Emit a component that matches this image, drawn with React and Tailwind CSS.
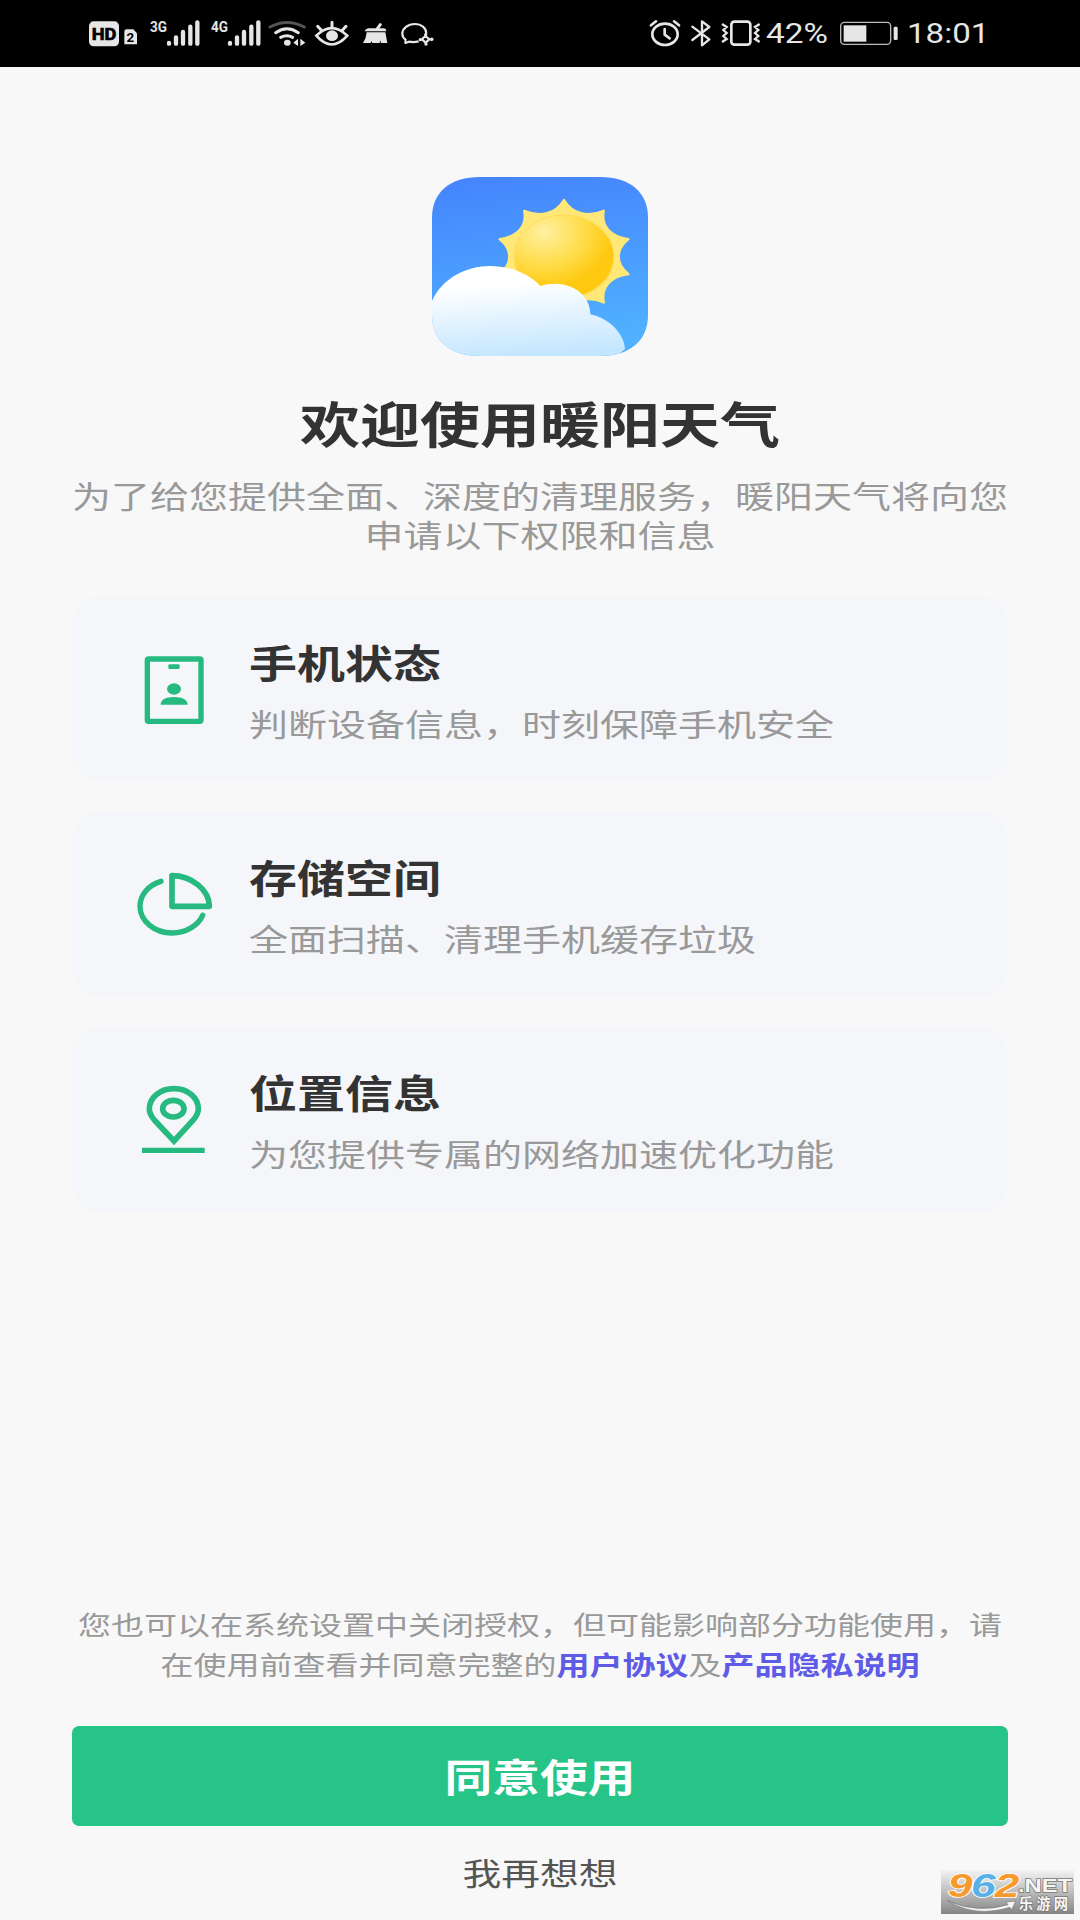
import clsx from 'clsx';

const FONT = "font-['Noto_Sans_CJK_SC','Liberation_Sans',sans-serif]";

const PERMISSIONS = [
  { icon: IdCardIcon, title: '手机状态', desc: '判断设备信息，时刻保障手机安全' },
  { icon: PieIcon, title: '存储空间', desc: '全面扫描、清理手机缓存垃圾' },
  { icon: PinIcon, title: '位置信息', desc: '为您提供专属的网络加速优化功能' },
];

export default function App() {
  return (
    <div className={clsx('relative flex h-[1920px] w-[1080px] flex-col overflow-hidden bg-[#f8f8f8]', FONT)}>
      <StatusBar />

      <main className="flex flex-1 flex-col items-center px-[72px]">
        <AppLogo />
        <Wide as="h1" scale="scale-x-[1.225]" className="mt-[31px] text-[49px] leading-[70px] font-bold text-[#333333]">欢迎使用暖阳天气</Wide>
        <Wide as="p" scale="scale-x-[1.258]" className="mt-[19px] text-center text-[31px] leading-[38.5px] text-[#999999]">
          为了给您提供全面、深度的清理服务，暖阳天气将向您
          <br />
          申请以下权限和信息
        </Wide>

        <div className="mt-[44px] flex w-full flex-col gap-[30px]">
          {PERMISSIONS.map((p) => <PermissionCard key={p.title} {...p} />)}
        </div>

        <Wide as="p" scale="scale-x-[1.245]" className="mt-auto text-center text-[26.5px] leading-[40px] text-[#999999]">
          您也可以在系统设置中关闭授权，但可能影响部分功能使用，请
          <br />
          在使用前查看并同意完整的
          <a className="font-bold text-[#5e5ce6]">用户协议</a>及<a className="font-bold text-[#5e5ce6]">产品隐私说明</a>
        </Wide>
        <button className="mt-[42px] flex h-[100px] w-full items-center justify-center rounded-[7px] bg-[#27c487] pb-[3px] text-[38.5px] leading-[60px] font-bold text-white">
          <Wide scale="scale-x-[1.24]">同意使用</Wide>
        </button>
        <button className="mt-[22px] mb-[24px] text-[31px] leading-[48px] text-[#555555]">
          <Wide scale="scale-x-[1.25]">我再想想</Wide>
        </button>
      </main>

      <Watermark />
    </div>
  );
}

// text with widened glyphs
function Wide({ as: Tag = 'span', scale, className, children }) {
  return (
    <Tag className={clsx('block origin-center whitespace-nowrap', scale, className)}>{children}</Tag>
  );
}

function PermissionCard({ icon: Icon, title, desc }) {
  return (
    <section className="flex h-[185px] items-center gap-[36px] rounded-[26px] bg-[#f5f6fa] pl-[61px]">
      <Icon />
      <div className="mb-[2px] flex flex-col whitespace-nowrap">
        <h2 className="origin-left scale-x-[1.24] text-[38.7px] leading-[60px] font-bold text-[#333333]">{title}</h2>
        <p className="mt-[8px] origin-left scale-x-[1.258] text-[31px] leading-[48px] text-[#999999]">{desc}</p>
      </div>
    </section>
  );
}

/* ---------- status bar ---------- */

function StatusBar() {
  return (
    <header className="flex h-[67px] shrink-0 items-center justify-between bg-black pr-[92px] pl-[88px]">
      <div className="flex items-center">
        <HdIcon />
        <SignalIcon label="3G" />
        <SignalIcon label="4G" />
        <WifiIcon />
        <EyeIcon />
        <BroomIcon />
        <ChatIcon />
      </div>
      <div className="flex items-center font-['Roboto',sans-serif] text-[28px] leading-[67px] text-[#e6e6e6]">
        <AlarmIcon />
        <BluetoothIcon />
        <VibrateIcon />
        <span className="mr-[1px] w-[71px] origin-left scale-x-[1.19]">42%</span>
        <BatteryIcon />
        <span className="w-[81px] origin-left scale-x-[1.18]">18:01</span>
      </div>
    </header>
  );
}

function HdIcon() {
  return (
    <svg width="52" height="67" viewBox="54 0 156 201">
      <rect x="57" y="64" width="90" height="75" rx="14" fill="#e6e6e6" />
      <text x="102" y="120" textAnchor="middle" textLength="74" lengthAdjust="spacingAndGlyphs" fontSize="50" fontWeight="700" fontFamily="Roboto" fill="#000" stroke="#000" strokeWidth="2">HD</text>
      <path d="M170 88h20l11 12v33h-38V95q0-7 7-7z" fill="#e6e6e6" />
      <text x="181" y="126" textAnchor="middle" textLength="23" lengthAdjust="spacingAndGlyphs" fontSize="40" fontWeight="700" fontFamily="Roboto" fill="#000">2</text>
    </svg>
  );
}

function SignalIcon({ label }) {
  return (
    <svg width="61" height="67" viewBox="210 0 183 201">
      <text x="240" y="95" textLength="51" lengthAdjust="spacingAndGlyphs" fontSize="45" fontWeight="700" fontFamily="Roboto" fill="#e6e6e6">{label}</text>
      <g stroke="#e6e6e6" strokeWidth="13" strokeLinecap="round">
        <path d="M297 129v2M318 112v19M339 96v35M361 80v51M382 67v64" />
      </g>
    </svg>
  );
}

function WifiIcon() {
  return (
    <svg className="ml-[2px]" width="45" height="67" viewBox="584 0 135 201" fill="none" strokeWidth="9" strokeLinecap="round">
      <path d="M602 81Q653 54 705 81" stroke="#555" />
      <path d="M619 98Q653 74 687 98M634 112Q653 102 670 112" stroke="#e6e6e6" />
      <ellipse cx="654" cy="128" rx="10" ry="9" fill="#e6e6e6" />
      <path d="M686 116v22l-14-10zM693 116v22l15-10z" fill="#e6e6e6" />
    </svg>
  );
}

function EyeIcon() {
  return (
    <svg width="46" height="67" viewBox="719 0 138 201" fill="none" stroke="#e6e6e6" strokeWidth="8" strokeLinecap="round">
      <path d="M741 107Q787 62 834 107Q787 160 741 107z" />
      <ellipse cx="788" cy="107" rx="18" ry="16" fill="#e6e6e6" stroke="none" />
      <path d="M788 67v14M745 79l11 12M830 79l-11 12" strokeWidth="9" />
    </svg>
  );
}

function BroomIcon() {
  return (
    <svg width="43" height="67" viewBox="857 0 129 201" fill="#e6e6e6">
      <path d="M924 86l9-12" stroke="#e6e6e6" strokeWidth="9" strokeLinecap="round" />
      <path d="M897 85h48q6 1 6 9H886q2-8 11-9z" />
      <path d="M892 97h56q3 16 6 32h-19l-2-8-2 8h-22l-3-6-2 6H881q10-14 11-32z" />
    </svg>
  );
}

function ChatIcon() {
  return (
    <svg width="38" height="67" viewBox="986 0 114 201" fill="none" stroke="#e6e6e6" strokeWidth="6.5" strokeLinejoin="round">
      <path d="M1071 101C1071 84 1056 72 1036 72S999 85 999 101Q999 112 1009 119L1008 129L1019 125Q1032 128 1048 124" />
      <path d="M1068 108L1080 118L1069 128L1058 118z" />
      <g fill="#e6e6e6" stroke="none">
        <circle cx="1069" cy="104" r="5" /><circle cx="1087" cy="118" r="5.5" />
        <circle cx="1070" cy="132" r="5" /><circle cx="1053" cy="119" r="5" />
      </g>
    </svg>
  );
}

function AlarmIcon() {
  return (
    <svg width="34" height="67" viewBox="54 0 102 201" fill="none" stroke="#e6e6e6" strokeWidth="8" strokeLinecap="round" strokeLinejoin="round">
      <ellipse cx="105" cy="103" rx="38" ry="32" />
      <path d="M104 87v17l15 11M63 76l15-12M147 76l-15-12" />
    </svg>
  );
}

function BluetoothIcon() {
  return (
    <svg width="35" height="67" viewBox="157 0 105 201" fill="none" stroke="#e6e6e6" strokeWidth="7" strokeLinecap="round" strokeLinejoin="round">
      <path d="M188 80l51 38-22 18V64l22 17-51 39" />
    </svg>
  );
}

function VibrateIcon() {
  return (
    <svg width="49" height="67" viewBox="266 0 147 201" fill="none" stroke="#e6e6e6" strokeWidth="8">
      <rect x="309" y="65" width="57" height="69" rx="9" />
      <path d="M281 72l14 9-10 9 10 9-10 9 10 9-14 9M394 72l-14 9 10 9-10 9 10 9-10 9 14 9" strokeWidth="7" />
    </svg>
  );
}

function BatteryIcon() {
  return (
    <svg width="69" height="67" viewBox="624 0 207 201">
      <rect x="632" y="67" width="150" height="66" rx="11" fill="none" stroke="#bbb" strokeWidth="4" />
      <rect x="641" y="76" width="68" height="49" fill="#e6e6e6" />
      <rect x="791" y="80" width="12" height="40" rx="4" fill="#e6e6e6" />
    </svg>
  );
}

/* ---------- logo ---------- */

// ten-pointed sun outline with scooped edges
function sunPath(cx, cy, rx, ry) {
  const at = (deg, k) => {
    const a = (deg * Math.PI) / 180;
    return `${(cx + Math.sin(a) * rx * k).toFixed(1)} ${(cy - Math.cos(a) * ry * k).toFixed(1)}`;
  };
  let d = `M${at(0, 1)}`;
  for (let i = 0; i < 10; i++) d += `C${at(i * 36 + 9, 0.77)} ${at(i * 36 + 27, 0.77)} ${at((i + 1) * 36, 1)}`;
  return d + 'Z';
}

function AppLogo() {
  return (
    <svg className="mt-[110px] shrink-0" width="216" height="179" viewBox="36 36 648 537">
      <defs>
        <linearGradient id="sky" x1="0" y1="0" x2="0.15" y2="1">
          <stop offset="0" stopColor="#4583fd" /><stop offset="1" stopColor="#4fb1ff" />
        </linearGradient>
        <radialGradient id="sun" cx="0.3" cy="0.2" r="0.85">
          <stop offset="0" stopColor="#fff0a0" /><stop offset="0.5" stopColor="#ffdb45" /><stop offset="0.8" stopColor="#ffc911" />
        </radialGradient>
        <linearGradient id="cloud" x1="0.35" y1="0" x2="0.5" y2="1">
          <stop offset="0.2" stopColor="#ffffff" /><stop offset="1" stopColor="#c3e6ff" />
        </linearGradient>
        <clipPath id="tile">
          <path d="M180 36H540C630 36 684 82 684 158V450C684 527 630 573 540 573H180C90 573 36 527 36 450V158C36 82 90 36 180 36Z" />
        </clipPath>
      </defs>
      <g clipPath="url(#tile)">
        <rect x="36" y="36" width="648" height="537" fill="url(#sky)" />
        <path d={sunPath(432, 275, 203, 170)} fill="#ffe877" stroke="#ffe877" strokeWidth="7" strokeLinejoin="round" />
        <ellipse cx="432" cy="275" rx="150" ry="125" fill="url(#sun)" stroke="#ffdf62" strokeWidth="4" />
        <path d="M36 408C68 338 140 303 210 303C270 303 325 325 361 363C375 358 390 356 408 356C470 358 513 400 511 448C562 458 612 502 615 552L590 573H36Z" fill="url(#cloud)" />
      </g>
    </svg>
  );
}

/* ---------- permission icons ---------- */

function IdCardIcon() {
  return (
    <svg className="shrink-0" width="80" height="80" viewBox="219 180 240 240" fill="#26ba80">
      <rect x="262" y="207" width="161" height="187" rx="4" fill="none" stroke="#26ba80" strokeWidth="16" />
      <rect x="325" y="223" width="34" height="14" rx="4" />
      <ellipse cx="342" cy="297" rx="21" ry="17" />
      <path d="M302 344Q303 321 342 321T383 344Z" />
    </svg>
  );
}

function PieIcon() {
  return (
    <svg className="shrink-0" width="80" height="80" viewBox="219 180 240 240" fill="none" stroke="#26ba80" strokeWidth="17" strokeLinecap="round" strokeLinejoin="round">
      <path d="M336 212V304H448C448 255 395 212 336 212Z" />
      <path d="M303 229C265 240 240 270 240 304C240 348 283 384 336 384C378 384 416 361 428 331" strokeWidth="16" />
    </svg>
  );
}

function PinIcon() {
  return (
    <svg className="shrink-0" width="80" height="80" viewBox="219 180 240 240" fill="none" stroke="#26ba80" strokeWidth="17">
      <path d="M342 363L283 300C273 288 268 279 268 267C268 232 301 206 342 206S415 232 415 267C415 279 410 288 400 300Z" />
      <ellipse cx="340" cy="266" rx="32" ry="25" />
      <path d="M246 391H434" strokeWidth="16" />
    </svg>
  );
}

function Watermark() {
  return (
    <svg className="absolute right-[6px] bottom-[6px]" width="133" height="44" viewBox="63 60 399 132">
      <defs>
        <linearGradient id="plate" x1="0" y1="0" x2="0" y2="1">
          <stop offset="0" stopColor="#f3f3f3" /><stop offset="0.5" stopColor="#bdbdbd" /><stop offset="1" stopColor="#858585" />
        </linearGradient>
      </defs>
      <rect x="63" y="60" width="399" height="132" fill="url(#plate)" />
      <g fontFamily="Liberation Sans" fontSize="97" fontWeight="700" fontStyle="italic" stroke="#fff" strokeWidth="5" paintOrder="stroke">
        <text x="83" y="140" textLength="74" lengthAdjust="spacingAndGlyphs" fill="#f79a2d">9</text>
        <text x="153" y="140" textLength="74" lengthAdjust="spacingAndGlyphs" fill="#58b0e6">6</text>
        <text x="224" y="140" textLength="74" lengthAdjust="spacingAndGlyphs" fill="#f79a2d">2</text>
      </g>
      <path d="M82 152Q170 192 264 164L258 156L287 153L275 180L270 172Q165 204 82 152Z" fill="#f4f4f4" stroke="#777" strokeWidth="2" />
      <g fill="#f6f6f6" stroke="#777" strokeWidth="4" paintOrder="stroke" fontWeight="700">
        <text x="294" y="125" textLength="162" lengthAdjust="spacingAndGlyphs" fontSize="57" fontFamily="Liberation Sans">.NET</text>
        <text x="296" y="177" textLength="148" fontSize="43" fontFamily="Noto Sans CJK SC">乐游网</text>
      </g>
    </svg>
  );
}
